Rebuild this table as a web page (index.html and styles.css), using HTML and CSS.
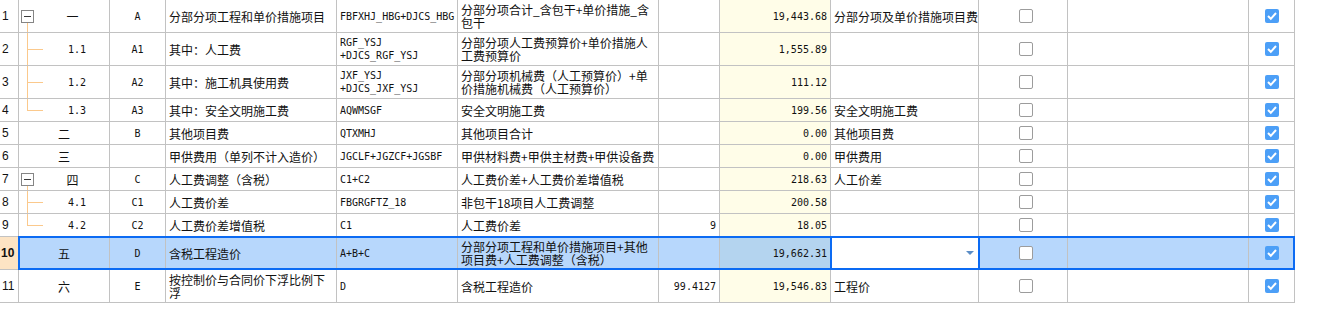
FILE: index.html
```html
<!DOCTYPE html>
<html lang="zh-CN">
<head>
<meta charset="utf-8">
<title>费用汇总</title>
<link rel="stylesheet" href="styles.css">
</head>
<body>
<div class="sheet">
  <div class="row tall">
    <div class="c num">1</div>
    <div class="c lvl parent"><span class="toggle"></span><span class="lvl-text">一</span></div>
    <div class="c code mono">A</div>
    <div class="c name">分部分项工程和单价措施项目</div>
    <div class="c formula mono">FBFXHJ_HBG+DJCS_HBG</div>
    <div class="c desc">分部分项合计_含包干+单价措施_含包干</div>
    <div class="c rate mono"></div>
    <div class="c amt mono">19,443.68</div>
    <div class="c cat">分部分项及单价措施项目费</div>
    <div class="c chk"><span class="box"></span></div>
    <div class="c blank"></div>
    <div class="c chk2"><span class="box on"><svg width="14" height="14" viewBox="0 0 14 14"><polyline points="3,7 5.8,9.8 11,4" fill="none" stroke="#fff" stroke-width="2"/></svg></span></div>
  </div>
  <div class="row tall">
    <div class="c num">2</div>
    <div class="c lvl child mid mono">1.1</div>
    <div class="c code mono">A1</div>
    <div class="c name">其中：人工费</div>
    <div class="c formula mono">RGF_YSJ<wbr>+DJCS_RGF_YSJ</div>
    <div class="c desc">分部分项人工费预算价+单价措施人工费预算价</div>
    <div class="c rate mono"></div>
    <div class="c amt mono">1,555.89</div>
    <div class="c cat"></div>
    <div class="c chk"><span class="box"></span></div>
    <div class="c blank"></div>
    <div class="c chk2"><span class="box on"><svg width="14" height="14" viewBox="0 0 14 14"><polyline points="3,7 5.8,9.8 11,4" fill="none" stroke="#fff" stroke-width="2"/></svg></span></div>
  </div>
  <div class="row tall">
    <div class="c num">3</div>
    <div class="c lvl child mid mono">1.2</div>
    <div class="c code mono">A2</div>
    <div class="c name">其中：施工机具使用费</div>
    <div class="c formula mono">JXF_YSJ<wbr>+DJCS_JXF_YSJ</div>
    <div class="c desc">分部分项机械费（人工预算价）+单价措施机械费（人工预算价）</div>
    <div class="c rate mono"></div>
    <div class="c amt mono">111.12</div>
    <div class="c cat"></div>
    <div class="c chk"><span class="box"></span></div>
    <div class="c blank"></div>
    <div class="c chk2"><span class="box on"><svg width="14" height="14" viewBox="0 0 14 14"><polyline points="3,7 5.8,9.8 11,4" fill="none" stroke="#fff" stroke-width="2"/></svg></span></div>
  </div>
  <div class="row">
    <div class="c num">4</div>
    <div class="c lvl child last mono">1.3</div>
    <div class="c code mono">A3</div>
    <div class="c name">其中：安全文明施工费</div>
    <div class="c formula mono">AQWMSGF</div>
    <div class="c desc">安全文明施工费</div>
    <div class="c rate mono"></div>
    <div class="c amt mono">199.56</div>
    <div class="c cat">安全文明施工费</div>
    <div class="c chk"><span class="box"></span></div>
    <div class="c blank"></div>
    <div class="c chk2"><span class="box on"><svg width="14" height="14" viewBox="0 0 14 14"><polyline points="3,7 5.8,9.8 11,4" fill="none" stroke="#fff" stroke-width="2"/></svg></span></div>
  </div>
  <div class="row">
    <div class="c num">5</div>
    <div class="c lvl">二</div>
    <div class="c code mono">B</div>
    <div class="c name">其他项目费</div>
    <div class="c formula mono">QTXMHJ</div>
    <div class="c desc">其他项目合计</div>
    <div class="c rate mono"></div>
    <div class="c amt mono">0.00</div>
    <div class="c cat">其他项目费</div>
    <div class="c chk"><span class="box"></span></div>
    <div class="c blank"></div>
    <div class="c chk2"><span class="box on"><svg width="14" height="14" viewBox="0 0 14 14"><polyline points="3,7 5.8,9.8 11,4" fill="none" stroke="#fff" stroke-width="2"/></svg></span></div>
  </div>
  <div class="row">
    <div class="c num">6</div>
    <div class="c lvl">三</div>
    <div class="c code mono"></div>
    <div class="c name">甲供费用（单列不计入造价）</div>
    <div class="c formula mono">JGCLF+JGZCF+JGSBF</div>
    <div class="c desc">甲供材料费+甲供主材费+甲供设备费</div>
    <div class="c rate mono"></div>
    <div class="c amt mono">0.00</div>
    <div class="c cat">甲供费用</div>
    <div class="c chk"><span class="box"></span></div>
    <div class="c blank"></div>
    <div class="c chk2"><span class="box on"><svg width="14" height="14" viewBox="0 0 14 14"><polyline points="3,7 5.8,9.8 11,4" fill="none" stroke="#fff" stroke-width="2"/></svg></span></div>
  </div>
  <div class="row">
    <div class="c num">7</div>
    <div class="c lvl parent"><span class="toggle"></span><span class="lvl-text">四</span></div>
    <div class="c code mono">C</div>
    <div class="c name">人工费调整（含税）</div>
    <div class="c formula mono">C1+C2</div>
    <div class="c desc">人工费价差+人工费价差增值税</div>
    <div class="c rate mono"></div>
    <div class="c amt mono">218.63</div>
    <div class="c cat">人工价差</div>
    <div class="c chk"><span class="box"></span></div>
    <div class="c blank"></div>
    <div class="c chk2"><span class="box on"><svg width="14" height="14" viewBox="0 0 14 14"><polyline points="3,7 5.8,9.8 11,4" fill="none" stroke="#fff" stroke-width="2"/></svg></span></div>
  </div>
  <div class="row">
    <div class="c num">8</div>
    <div class="c lvl child mid mono">4.1</div>
    <div class="c code mono">C1</div>
    <div class="c name">人工费价差</div>
    <div class="c formula mono">FBGRGFTZ_18</div>
    <div class="c desc">非包干18项目人工费调整</div>
    <div class="c rate mono"></div>
    <div class="c amt mono">200.58</div>
    <div class="c cat"></div>
    <div class="c chk"><span class="box"></span></div>
    <div class="c blank"></div>
    <div class="c chk2"><span class="box on"><svg width="14" height="14" viewBox="0 0 14 14"><polyline points="3,7 5.8,9.8 11,4" fill="none" stroke="#fff" stroke-width="2"/></svg></span></div>
  </div>
  <div class="row">
    <div class="c num">9</div>
    <div class="c lvl child last mono">4.2</div>
    <div class="c code mono">C2</div>
    <div class="c name">人工费价差增值税</div>
    <div class="c formula mono">C1</div>
    <div class="c desc">人工费价差</div>
    <div class="c rate mono">9</div>
    <div class="c amt mono">18.05</div>
    <div class="c cat"></div>
    <div class="c chk"><span class="box"></span></div>
    <div class="c blank"></div>
    <div class="c chk2"><span class="box on"><svg width="14" height="14" viewBox="0 0 14 14"><polyline points="3,7 5.8,9.8 11,4" fill="none" stroke="#fff" stroke-width="2"/></svg></span></div>
  </div>
  <div class="row tall sel">
    <div class="c num">10</div>
    <div class="c lvl">五</div>
    <div class="c code mono">D</div>
    <div class="c name">含税工程造价</div>
    <div class="c formula mono">A+B+C</div>
    <div class="c desc">分部分项工程和单价措施项目+其他项目费+人工费调整（含税）</div>
    <div class="c rate mono"></div>
    <div class="c amt mono">19,662.31</div>
    <div class="c cat"><div class="editor"><span class="caret"></span></div></div>
    <div class="c chk"><span class="box"></span></div>
    <div class="c blank"></div>
    <div class="c chk2"><span class="box on"><svg width="14" height="14" viewBox="0 0 14 14"><polyline points="3,7 5.8,9.8 11,4" fill="none" stroke="#fff" stroke-width="2"/></svg></span></div>
  </div>
  <div class="row tall">
    <div class="c num">11</div>
    <div class="c lvl">六</div>
    <div class="c code mono">E</div>
    <div class="c name">按控制价与合同价下浮比例下浮</div>
    <div class="c formula mono">D</div>
    <div class="c desc">含税工程造价</div>
    <div class="c rate mono">99.4127</div>
    <div class="c amt mono">19,546.83</div>
    <div class="c cat">工程价</div>
    <div class="c chk"><span class="box"></span></div>
    <div class="c blank"></div>
    <div class="c chk2"><span class="box on"><svg width="14" height="14" viewBox="0 0 14 14"><polyline points="3,7 5.8,9.8 11,4" fill="none" stroke="#fff" stroke-width="2"/></svg></span></div>
  </div>
</div>
</body>
</html>
```
FILE: styles.css
```css
html, body {
  margin: 0;
  padding: 0;
  background: #ffffff;
}
body {
  font-family: "Noto Sans CJK SC", "Noto Sans", sans-serif;
  font-size: 12px;
  color: #111111;
}
.sheet {
  width: 1295px;
}
.row {
  display: grid;
  grid-template-columns: 19px 91px 56px 171px 121px 201px 61px 111px 148px 89px 181px 46px;
  height: 23px;
}
.row.tall {
  height: 33px;
}
.c {
  box-sizing: border-box;
  border-right: 1px solid #c2c2c2;
  border-bottom: 1px solid #c2c2c2;
  display: flex;
  align-items: center;
  padding: 0 3px;
  line-height: 13px;
  min-width: 0;
  white-space: normal;
}
.mono {
  font-family: "DejaVu Sans Mono", "Liberation Mono", monospace;
  font-size: 10px;
}
.num {
  font-family: "Liberation Sans", Arial, sans-serif;
  font-size: 12px;
  padding: 0 0 0 2px;
}
.lvl {
  justify-content: center;
  padding: 0;
}
.lvl.parent {
  justify-content: flex-start;
  padding-left: 2px;
  background: linear-gradient(#fbc98c, #fbc98c) no-repeat 8px 100% / 1px 50%;
}
.lvl-text {
  flex: 1;
  text-align: center;
  margin-left: 2px;
}
.toggle {
  flex: none;
  box-sizing: border-box;
  width: 13px;
  height: 13px;
  border: 1px solid #858585;
  background: #ffffff;
  display: flex;
  align-items: center;
  justify-content: center;
}
.toggle::before {
  content: "";
  width: 7px;
  height: 1px;
  background: #3a3a3a;
}
.lvl.child {
  padding-left: 26px;
}
.lvl.mid {
  background:
    linear-gradient(#fbc98c, #fbc98c) no-repeat 8px 0 / 1px 100%,
    linear-gradient(#fbc98c, #fbc98c) no-repeat 8px 50% / 16px 1px;
}
.lvl.last {
  background:
    linear-gradient(#fbc98c, #fbc98c) no-repeat 8px 0 / 1px 50%,
    linear-gradient(#fbc98c, #fbc98c) no-repeat 8px 50% / 16px 1px;
}
.code {
  justify-content: center;
}
.formula {
  padding-right: 2px;
}
.rate {
  justify-content: flex-end;
}
.amt {
  justify-content: flex-end;
  background: #fffde8;
}
.cat {
  white-space: nowrap;
  padding-right: 0;
}
.chk {
  justify-content: center;
  padding-left: 5px;
  padding-right: 0;
}
.chk2 {
  justify-content: center;
  padding: 0;
}
.box {
  box-sizing: border-box;
  width: 14px;
  height: 14px;
  border: 1px solid #9c9c9c;
  border-radius: 2px;
  background: #ffffff;
  display: block;
}
.box.on {
  border: none;
  background: #4c9ff7;
}
.box svg {
  display: block;
}

/* selected row */
.row.sel {
  position: relative;
}
.row.sel .c {
  background: #b7d7fc;
}
.row.sel .amt {
  background: #b4d4ef;
}
.row.sel .num {
  background: #fde4c4;
  font-weight: bold;
  padding-left: 1px;
}
.row.sel::after {
  content: "";
  position: absolute;
  left: 18px;
  right: 0;
  top: -1px;
  bottom: 0;
  border: 2px solid #0c6bf3;
  pointer-events: none;
}
.row.sel .cat {
  position: relative;
}
.editor {
  position: absolute;
  left: -1px;
  right: -2px;
  top: -1px;
  bottom: -1px;
  box-sizing: border-box;
  border: 2px solid #0c6bf3;
  background: #ffffff;
  display: flex;
  align-items: center;
  justify-content: flex-end;
  padding-right: 4px;
  z-index: 1;
}
.caret {
  width: 0;
  height: 0;
  border-left: 4px solid transparent;
  border-right: 4px solid transparent;
  border-top: 4px solid #5b8dc6;
}
```
